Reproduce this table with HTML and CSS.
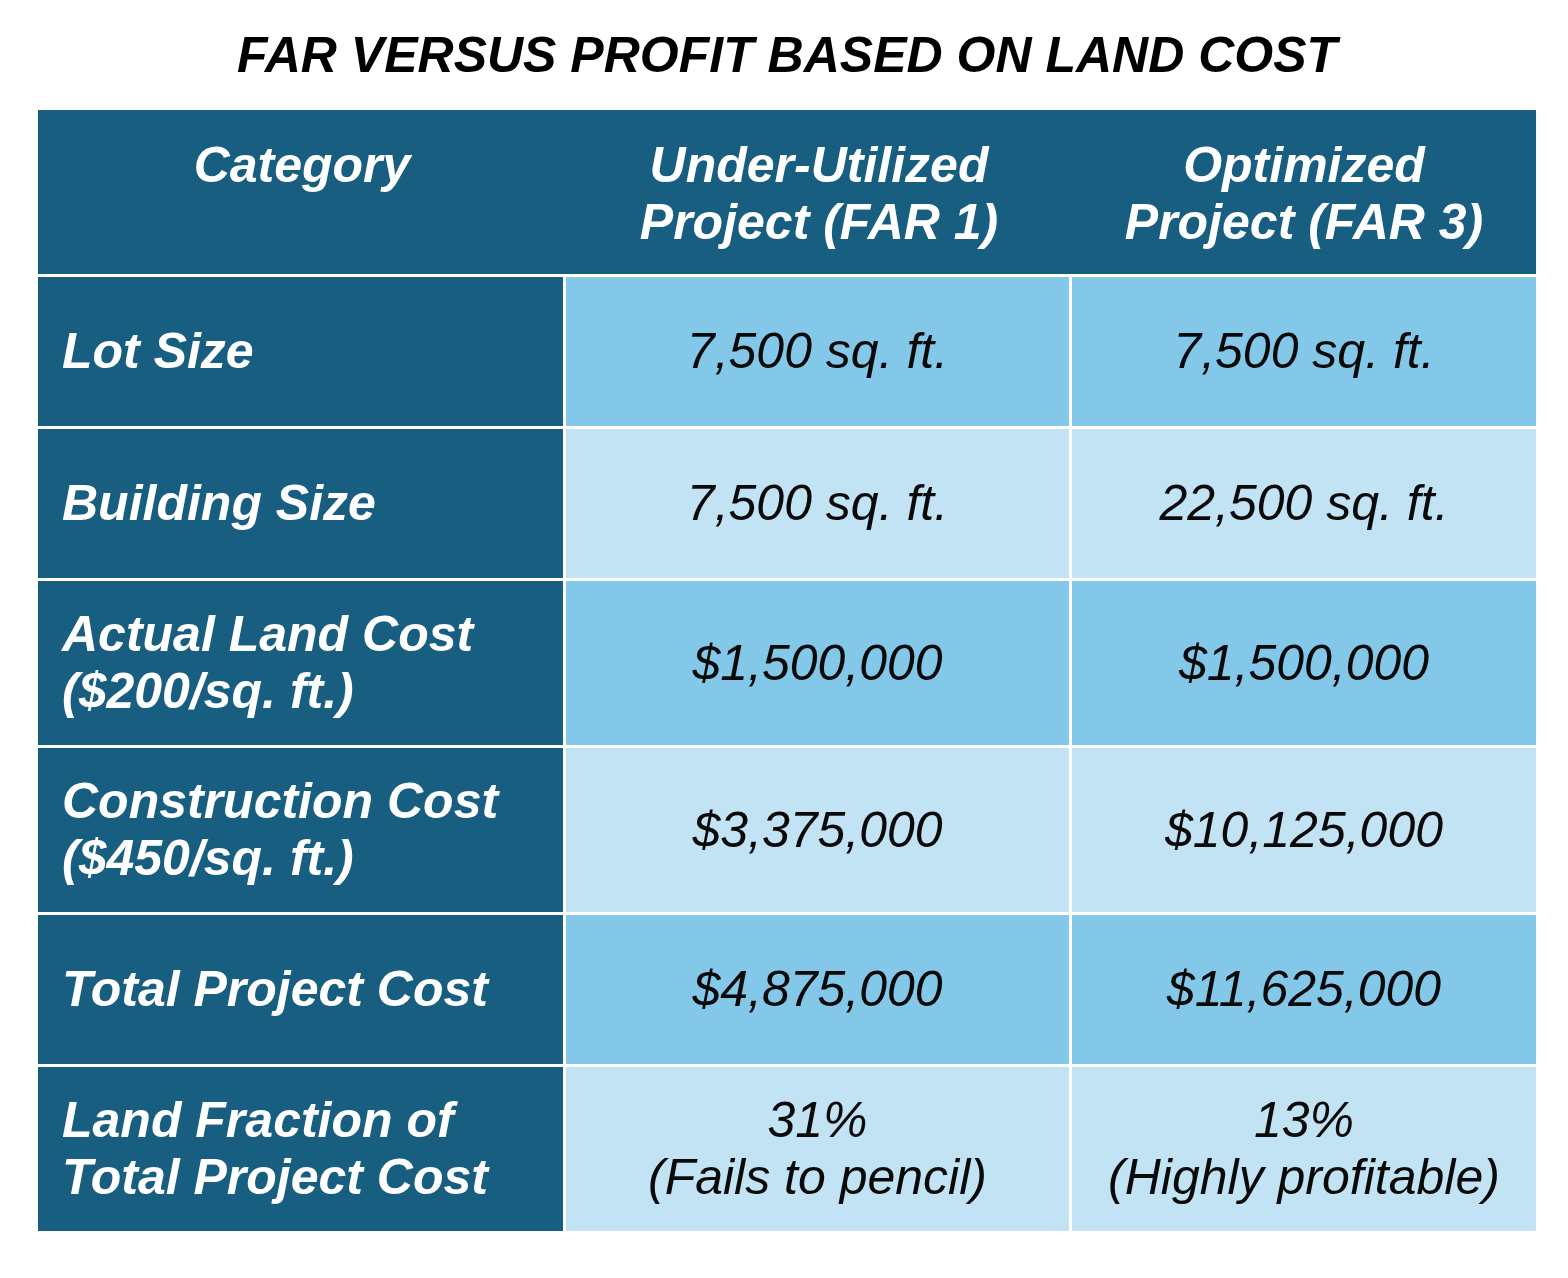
FILE: index.html
```html
<!DOCTYPE html>
<html lang="en">
<head>
<meta charset="utf-8">
<title>FAR versus profit based on land cost</title>
<link rel="stylesheet" href="styles.css">
</head>
<body>
<main class="page">
  <h1 class="title">FAR VERSUS PROFIT BASED ON LAND COST</h1>
  <div class="table">
    <div class="head">
      <div class="hcell">Category</div>
      <div class="hcell">Under-Utilized<br>Project (FAR 1)</div>
      <div class="hcell">Optimized<br>Project (FAR 3)</div>
    </div>

    <div class="cat">Lot Size</div>
    <div class="val mid">7,500 sq. ft.</div>
    <div class="val mid">7,500 sq. ft.</div>

    <div class="cat">Building Size</div>
    <div class="val pale">7,500 sq. ft.</div>
    <div class="val pale">22,500 sq. ft.</div>

    <div class="cat tall">Actual Land Cost<br>($200/sq. ft.)</div>
    <div class="val mid tall">$1,500,000</div>
    <div class="val mid tall">$1,500,000</div>

    <div class="cat tall">Construction Cost<br>($450/sq. ft.)</div>
    <div class="val pale tall">$3,375,000</div>
    <div class="val pale tall">$10,125,000</div>

    <div class="cat">Total Project Cost</div>
    <div class="val mid">$4,875,000</div>
    <div class="val mid">$11,625,000</div>

    <div class="cat tall">Land Fraction of<br>Total Project Cost</div>
    <div class="val pale tall">31%<br>(Fails to pencil)</div>
    <div class="val pale tall">13%<br>(Highly profitable)</div>
  </div>
</main>
</body>
</html>
```

FILE: styles.css
```css
* { box-sizing: border-box; }

html, body {
  margin: 0;
  padding: 0;
  background: #ffffff;
}

body {
  font-family: "Liberation Sans", Arial, sans-serif;
  font-style: italic;
}

.page {
  width: 1568px;
  padding: 25px 32px 0 38px;
}

.title {
  margin: 0 0 25px 0;
  font-size: 50px;
  line-height: 60px;
  font-weight: 700;
  font-style: italic;
  color: #000000;
  text-align: center;
  width: 1498px;
}

.table {
  width: 1498px;
  display: grid;
  grid-template-columns: 525px 503px 464px;
  column-gap: 3px;
  row-gap: 3px;
  background: #ffffff;
  font-size: 50px;
  line-height: 57px;
}

.head {
  grid-column: 1 / 4;
  display: grid;
  grid-template-columns: 528px 506px 464px;
  background: #185e80;
  height: 164px;
  color: #ffffff;
  font-weight: 700;
}

.hcell {
  text-align: center;
  padding-top: 27px;
}

.cat {
  background: #185e80;
  color: #ffffff;
  font-weight: 700;
  padding: 0 20px 0 24px;
  min-height: 149px;
  display: flex;
  align-items: center;
}

.val {
  color: #0a0a0a;
  font-weight: 400;
  text-align: center;
  min-height: 149px;
  display: flex;
  align-items: center;
  justify-content: center;
}

.tall {
  min-height: 164px;
}

.mid { background: #84c8e9; }
.pale { background: #c2e3f3; }
```
